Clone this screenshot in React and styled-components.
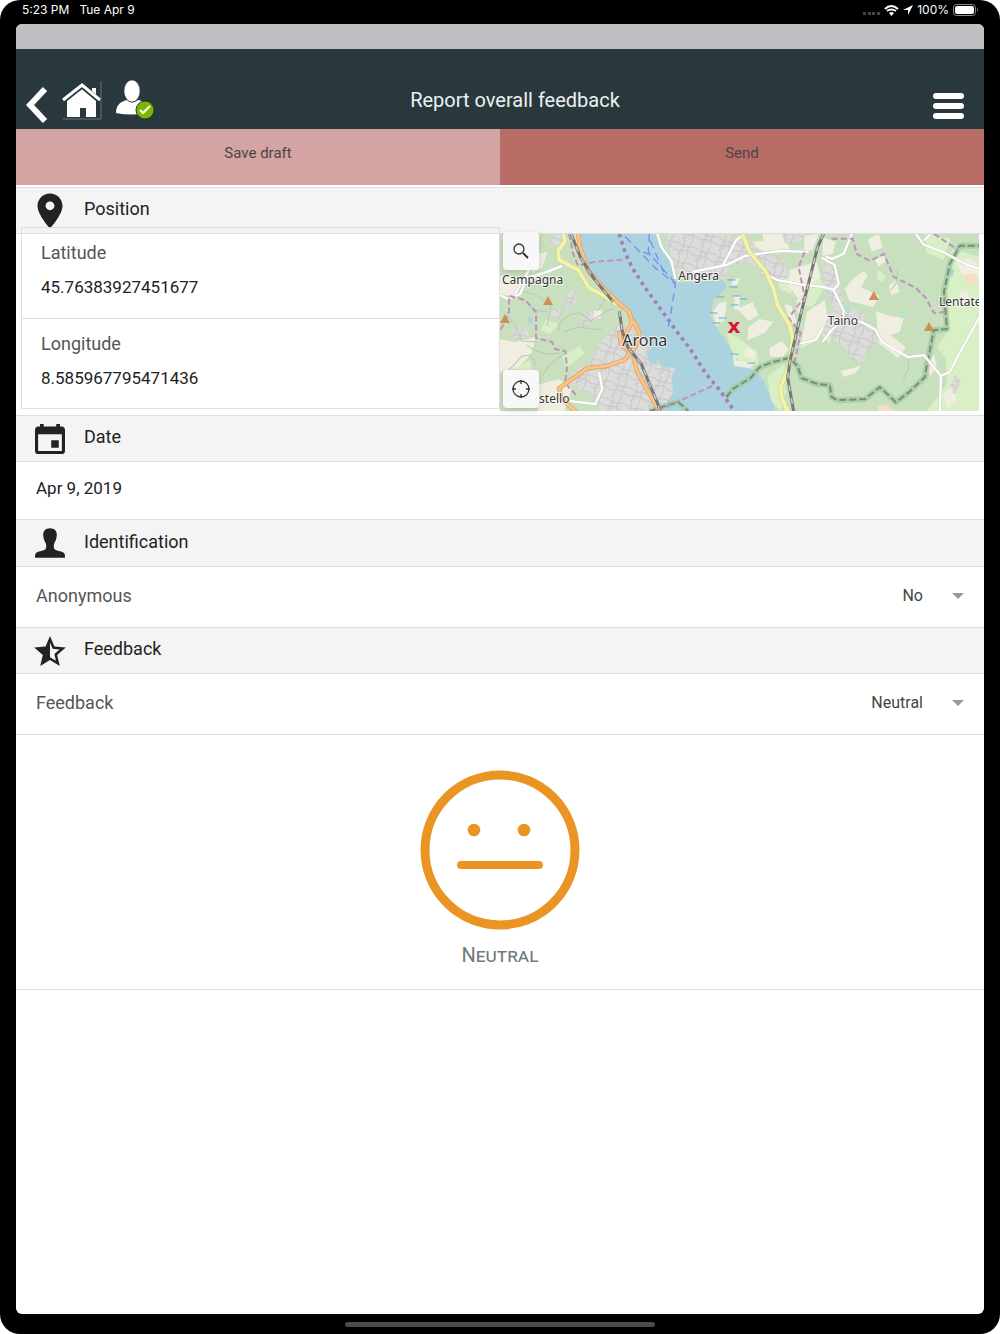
import React, { useState } from 'react';
import styled, { createGlobalStyle } from 'styled-components';
import { IoMdPin, IoMdCalendar, IoMdStarHalf } from 'react-icons/io';

const GlobalStyle = createGlobalStyle`
    * {
        box-sizing: border-box;
    }
    body {
        margin: 0;
        background: #fff;
        color: #222;
        font-family: Roboto, "Liberation Sans", sans-serif;
    }
    button, input, select {
        margin: 0;
        padding: 0;
        border: 0;
        background: transparent;
        color: inherit;
        font: inherit;
    }
`

const Device = styled.div`
    display: flex;
    flex-direction: column;
    min-height: 100vh;
    padding: 0 16px;
    background: #000;
    border-radius: 20px;
`

const StatusBar = styled.div`
    display: flex;
    align-items: center;
    gap: 10px;
    height: 24px;
    padding: 0 6px 4px;
    color: #fff;
    font: 12px/20px Inter, sans-serif;
`

const StatusRight = styled.div`
    display: flex;
    align-items: center;
    gap: 4px;
    margin-left: auto;
`

const Screen = styled.main`
    flex: 1;
    background: #fff;
    border-radius: 6px;
    overflow: hidden;
`

const TopStrip = styled.div`
    height: 25px;
    background: #bfbec3;
`

const Header = styled.header`
    display: grid;
    grid-template-columns: 1fr auto 1fr;
    align-items: center;
    height: 80px;
    padding: 22px 20px 0 10px;
    background: #28383d;
    color: #fff;
`

const HeaderIcons = styled.div`
    display: flex;
    align-items: center;
    gap: 14px;
`

const IconButton = styled.button`
    display: flex;
    cursor: pointer;
`

const Title = styled.h1`
    margin: 0;
    padding-left: 40px;
    color: #eef0f0;
    font-size: 20px;
    line-height: 24px;
    font-weight: 400;
`

const MenuButton = styled(IconButton)`
    justify-self: end;
    padding-top: 12px;
`

const Actions = styled.div`
    display: grid;
    grid-template-columns: 1fr 1fr;
    padding-bottom: 2px;
`

const ActionButton = styled.button`
    height: 56px;
    padding-bottom: 8px;
    background: ${props => props.$main ? "#b86c66" : "#d4a4a2"};
    color: #4d4444;
    font-size: 15px;
    cursor: pointer;
`

const SectionTitle = styled.h2`
    display: flex;
    align-items: center;
    gap: 14px;
    height: ${props => props.$tall ? "48px" : "47px"};
    margin: 0;
    padding: 0 14px;
    background: #f4f4f4;
    border: solid #dedede;
    border-width: 1px 0;
    font-size: 18px;
    font-weight: 400;
    svg {
        width: 40px;
        height: 40px;
    }
    span {
        padding-bottom: 4px;
    }
`

const PositionRow = styled.div`
    display: grid;
    grid-template-columns: 1fr 1fr;
    align-items: start;
    padding: 0 5px 4px;
`

const Coordinates = styled.div`
    position: relative;
    margin-top: -7px;
    border: 1px solid #dedede;
`

const Coordinate = styled.div`
    display: flex;
    flex-direction: column;
    gap: 10px;
    height: 90px;
    padding: 13px 19px 0;
    & + & {
        border-top: 1px solid #dedede;
    }
    label {
        color: #555;
        font-size: 18px;
        line-height: 24px;
    }
    input {
        width: 100%;
        font-size: 17px;
        line-height: 24px;
    }
`

const MapBox = styled.div`
    position: relative;
    height: 177px;
    > svg {
        display: block;
        width: 100%;
        height: 100%;
    }
`

const MapTools = styled.div`
    position: absolute;
    top: -2px;
    bottom: 3px;
    left: 3px;
    display: flex;
    flex-direction: column;
    justify-content: space-between;
`

const MapTool = styled.button`
    display: flex;
    align-items: center;
    justify-content: center;
    width: 36px;
    height: 38px;
    border-radius: 4px;
    background: #f8f8f8;
    box-shadow: 0 2px 6px rgba(0, 0, 0, 0.15);
    cursor: pointer;
`

const DateField = styled.input`
    display: block;
    width: 100%;
    height: 57px;
    padding: 0 20px 5px;
    font-size: 17px;
`

const SelectRow = styled.div`
    display: flex;
    align-items: center;
    justify-content: space-between;
    height: 60px;
    padding: 0 20px 3px;
    label {
        color: #555;
        font-size: 18px;
    }
`

const SelectBox = styled.div`
    display: flex;
    align-items: center;
    color: #444;
    select {
        appearance: none;
        width: 200px;
        height: 40px;
        padding-right: 41px;
        font-size: 16px;
        text-align-last: right;
    }
    svg {
        margin-left: -12px;
        pointer-events: none;
    }
`

const Result = styled.figure`
    display: flex;
    flex-direction: column;
    align-items: center;
    gap: 11px;
    margin: 0;
    padding: 35px 0 20px;
    border: solid #dedede;
    border-width: 1px 0;
    figcaption {
        color: #6f7b7e;
        font-size: 20px;
        line-height: 28px;
        font-variant: small-caps;
    }
`

const HomeBar = styled.div`
    display: flex;
    align-items: center;
    justify-content: center;
    height: 20px;
    &::after {
        content: "";
        width: 32%;
        height: 5px;
        border-radius: 3px;
        background: #4b4b4b;
    }
`

const LAKE = "M79 0 81 11 89 34 104 54 114 66 131 78 134 88 142 101 152 114 147 118 149 128 157 131 156 124 162 133 175 134 171 144 173 158 166 169 161 177H275L264 148 257 138 246 134 232 131V118L224 104 214 91 210 81 213 66 227 53 222 46 192 48 177 49 174 41 169 28 161 13 157 0Z"

const TOWNS = [
    "M119 91 134 88 142 101 152 114 147 118 149 128 157 131 163 134 175 134 171 144 173 158 166 169 161 177H101L92 160 70 150 74 137 88 130 95 114 104 103Z",
    "M163 0 213 0 240 3 262 17 280 25 288 38 284 50 262 38 247 28 229 32 224 45 203 43 190 48 179 44 171 24Z",
    "M321 28 335 34 338 52 343 70 363 81 374 94 376 108 366 120 362 130 351 126 340 110 322 99 325 88 333 74 324 53Z",
    "M281 0 303 0 300 8 285 10Z", "M69 57 77 58 74 71 67 77 64 70Z", "M80 84 93 75 94 85 83 94Z",
    "M49 77 59 75 64 82 54 86Z", "M10 100 25 93 30 101 19 106Z", "M454 140 460 148 453 160 449 151Z",
    "M49 3 62 0 60 10 51 14Z",
]

const FIELDS = [
    "M0 105 15 108 36 103 31 120 18 134 0 138Z", "M14 0 30 0 25 15 16 12Z", "M35 21 47 18 42 34 31 39Z",
    "M0 42 22 46 15 63 0 60Z", "M36 151 58 145 72 153 64 177H38Z", "M107 152 126 149 139 157 136 174 119 177 101 166Z",
    "M262 0 283 0 290 16 276 20 264 14Z", "M289 36 316 28 320 43 309 52 298 65 288 52Z", "M237 75 252 68 258 81 248 87Z",
    "M248 93 259 85 273 88 264 99 247 106Z", "M269 114 281 107 288 115 282 124 269 122Z",
    "M306 78 324 66 328 88 317 106 300 114Z", "M252 8 270 7 268 18 258 17Z", "M375 77 389 82 403 84 399 98 389 101 405 113 397 124 378 109Z",
    "M344 55 354 43 363 37 367 42 360 53 379 62 372 73 349 67Z", "M367 6 378 0 382 14 371 18Z", "M388 52 395 46 399 58 390 61Z",
    "M340 137 360 132 355 139 343 143Z", "M374 26 383 22 385 27 378 33Z", "M454 26 468 25 478 32V46L461 40Z",
    "M304 2 318 0 312 16 303 20Z", "M322 4 335 8 332 20 322 22Z", "M246 113 256 117 254 125 244 122Z",
    "M284 70 291 72 296 88 290 90Z", "M296 66 306 60 302 78 297 80Z", "M93 77 102 76 100 84 94 86Z",
    "M450 152 456 166 446 174 442 160Z", "M458 60 466 56 468 66 460 70Z", "M425 134 433 120 436 132 430 142Z",
]

const MEADOWS = [
    "M226 98 238 104 256 118 258 130 246 134 232 120Z", "M302 51 315 33 324 53 312 73 296 70Z",
    "M451 15 478 23V177H426L446 150 445 125 436 113 448 96 446 52Z", "M425 0 449 5 443 26 425 19Z",
    "M267 142 284 130 285 157 281 177 270 166Z", "M325 82 338 79 329 110 321 100Z", "M376 35 385 42 382 48 377 45Z",
    "M92 29 84 24 80 0 75 0 77 22Z", "M280 40 296 48 290 60 278 54Z", "M46 86 58 90 50 100 40 96Z",
    "M62 122 80 112 84 120 66 134Z", "M14 134 30 126 34 146 20 150Z",
]

const ROADS = [
    "M0 61 8 65 20 60 27 44 47 38 62 32", "M15 60 32 31", "M157 0 161 13 171 27 175 45",
    "M192 38 226 31 245 22 280 17 308 18", "M222 32 236 6 244 0", "M262 38 276 46 303 51 322 53 333 56",
    "M298 110 315 106 322 94", "M325 23 332 25 343 20 351 0", "M321 24 334 31 338 50 333 56 343 77 342 85 361 88 375 96 381 108 407 123 423 121 440 142 449 138 457 122 478 84",
    "M440 142 439 177", "M322 108 331 96 343 86", "M415 0 423 11 442 18 464 30 478 35", "M423 7 430 0",
    "M70 167 95 170 102 155 99 138",
]

const LANES = [
    "M8 82 15 91 22 107 38 108", "M22 57 36 61 51 72 47 92", "M58 98 60 88 71 80 80 79 91 87 107 77 115 74",
    "M63 98 78 93 102 96", "M27 111 34 116 47 120 61 119", "M8 137 22 122 31 121 36 132", "M43 140 50 130 64 120",
    "M106 65 97 77", "M34 76 47 78", "M390 56 395 50 397 36", "M407 125 408 134 402 146",
]

const BOUNDARIES = [
    "M-3 104 9 78 9 62 25 66 36 78 36 104 52 108 55 115 65 117 67 133 65 149 76 161",
    "M69 0 73 20 78 32 94 28 121 26 127 24", "M331 5 352 5 356 20 369 27 383 20 393 43 415 54 425 64 433 79 444 78", "M433 0 457 16",
    "M304 18 298 33 304 63 288 84 300 99 294 128", "M149 180 214 151",
]

const GREEN_BORDERS = [
    "M226 163 232 155 250 144 259 133 272 128 288 124 297 132 301 144 317 150 329 151 331 163 337 166 364 165 379 153 395 168 407 159 424 143 426 131 433 96 446 95 443 58 449 30 459 12 478 12",
    "M149 177 164 172 178 168 188 177",
]

const LOCAL_ROAD = "M63 0 65 7 58 17 59 26 70 32 78 36 89 54 104 62 116 70M242 0 249 18 257 28 265 37 273 55 277 71 289 91 292 104 289 131 280 153 281 163 288 180"
const MAIN_ROAD = "M78 0 80 14 88 37 104 55 117 68 129 78 132 88 127 97 119 99 121 110 133 121 137 138 159 177M134 88 139 99 136 111 124 126 106 132 87 134 72 145 59 154 61 164 75 177"
const RAILWAY = "M71 0 80 23 94 45 113 68M119 77 122 97 128 114 141 130 158 171 159 177M323 0 317 13 301 77 290 124 287 143 293 177"

const PEAKS = [[48, 67], [5, 85], [373, 62], [428, 93]]
const MARSH = [[231, 46], [233, 53], [220, 63], [236, 62], [234, 71], [213, 79], [222, 84], [216, 89], [243, 65], [234, 120], [251, 129]]

const MapDrawing = () => (
    <svg viewBox="0 0 478 177" preserveAspectRatio="xMidYMid slice" fill="none" role="img" aria-label="Map">
        <defs>
            <clipPath id="towns">
                <path d={TOWNS.join(" ")} />
            </clipPath>
            <pattern id="streets" width="19" height="17" patternUnits="userSpaceOnUse" patternTransform="rotate(18)">
                <path d="M0 4 7 6 19 4M6 0 7 6 4 17M13 0 12 9 14 17M0 12 12 9 19 12M4 17 10 10" stroke="#c0c0c0" strokeWidth=".8" />
            </pattern>
        </defs>
        <rect width="478" height="177" fill="#c8e0be" />
        <path d={MEADOWS.join(" ")} fill="#d9efc6" />
        <path d={FIELDS.join(" ")} fill="#efeee0" />
        <path d={TOWNS.join(" ")} fill="#dcdcda" />
        <rect width="478" height="177" fill="url(#streets)" clipPath="url(#towns)" />
        <path d={LAKE} fill="#abd3df" />
        <path d="M28 83 33 84 32 90 28 88ZM449 34 454 36 451 43 447 41Z" fill="#abd7df" />
        <path d="M28 73 33 70 34 78 29 76ZM398 78 406 78 405 84 399 84ZM344 72 350 71 348 78 343 79Z" fill="#b5e3cf" />
        <path d="M462 41 474 39 478 46 469 52ZM377 172 387 170 392 177H378Z" fill="#f4dfc5" />
        <path d="M212 78 219 69 226 68 224 86 216 92ZM234 62 240 61 239 75 234 76ZM232 45 239 44 237 51 231 52ZM233 118 236 127 254 128 250 134 234 132Z" fill="#efeee6" />
        <path d={LANES.join(" ")} stroke="#bdc5b8" />
        {GREEN_BORDERS.map(d => (
            <g key={d} strokeLinejoin="round">
                <path d={d} stroke="#9fcb9d" strokeWidth="6" opacity=".75" />
                <path d={d} stroke="#7b8b7b" strokeWidth="2" strokeDasharray="7 3" />
            </g>
        ))}
        <path d={ROADS.join(" ")} stroke="#cbcbc8" strokeWidth="3" strokeLinejoin="round" />
        <path d={ROADS.join(" ")} stroke="#fff" strokeWidth="2.2" strokeLinejoin="round" />
        <path d={BOUNDARIES.join(" ")} stroke="#bf93be" strokeWidth="2" strokeDasharray="6 3" />
        <g strokeLinejoin="round" strokeLinecap="round">
            <path d={LOCAL_ROAD} stroke="#cfd39a" strokeWidth="5" />
            <path d={LOCAL_ROAD} stroke="#f3f4a9" strokeWidth="3.6" />
            <path d={MAIN_ROAD} stroke="#dfa468" strokeWidth="4.6" />
            <path d={MAIN_ROAD} stroke="#f8c488" strokeWidth="3" />
        </g>
        <path d={RAILWAY} stroke="#777" strokeWidth="3" />
        <path d={RAILWAY} stroke="#ccc" strokeWidth="1.4" strokeDasharray="6 7" />
        <path d="M119 0 125 19 132 34 145 54 161 76 176 97 190 115 205 139 220 157 236 180" stroke="#a07fbb" strokeWidth="3.6" strokeDasharray="3.6 4" />
        <path d="M125 3 155 34 175 50 172 70 168 93M149 0 148 18 158 30 175 49M143 18 152 22M150 7 164 40" stroke="#7a8ff0" strokeWidth="1.4" strokeDasharray="8 5" />
        {MARSH.map(([x, y]) => <path key={`${x}-${y}`} d={`M${x - 4} ${y}h8`} stroke="#5ba9dc" />)}
        {PEAKS.map(([x, y]) => <path key={x} d={`M${x} ${y - 5}l5 9h-10z`} fill="#d08f55" />)}
        <g fill="#333" stroke="#fff" strokeWidth="2" strokeOpacity=".7" paintOrder="stroke" fontFamily="'Noto Sans', sans-serif" fontSize="12">
            <text x="2" y="50">Campagna</text>
            <text x="178" y="46">Angera</text>
            <text x="327" y="91">Taino</text>
            <text x="438" y="72">Lentate</text>
            <text x="39" y="169">stello</text>
            <text x="122" y="112" fontSize="16">Arona</text>
        </g>
        <text x="227" y="99" fill="#dc1438" fontFamily="'DejaVu Sans', sans-serif" fontWeight="700" fontSize="20">x</text>
    </svg>
)

const PersonIcon = () => (
    <svg viewBox="0 0 512 512" fill="currentColor" aria-hidden="true">
        <path d="M256 67C198 67 167 104 169 155C171 205 188 238 203 262C210 290 208 312 202 330C188 354 104 362 78 384C66 394 64 414 64 444H448C448 414 446 394 434 384C408 362 324 354 310 330C304 312 302 290 309 262C324 238 341 205 343 155C345 104 314 67 256 67Z" />
    </svg>
)

const StatusIcons = () => (
    <StatusRight>
        <svg width="50" height="14" viewBox="0 0 50 14" fill="#fff" aria-hidden="true">
            <path d="M0 9h3v3H0zM5 9h3v3H5zM9 9h3v3H9zM14 9h3v3h-3z" fill="#444" />
            <path d="M22 6Q28 0 35 6M24 8Q28 5 33 8" fill="none" stroke="#fff" strokeWidth="2" />
            <path d="M26 10q2.500-2 5 0L28.500 13z" />
            <path d="M50 2 40 7h5v5z" />
        </svg>
        100%
        <svg width="25" height="12" viewBox="0 0 25 12" aria-hidden="true">
            <rect x=".5" y=".5" width="22" height="11" rx="3" fill="none" stroke="#888" />
            <rect x="2" y="2" width="19" height="8" rx="2" fill="#fff" />
            <path d="M24 4q2 2 0 4z" fill="#888" />
        </svg>
    </StatusRight>
)

const DropDown = ({ id, value, options, onChange }) => (
    <SelectBox>
        <select id={id} value={value} onChange={e => onChange(e.target.value)}>
            {options.map(option => <option key={option}>{option}</option>)}
        </select>
        <svg width="12" height="6" viewBox="0 0 12 6" aria-hidden="true"><path d="M0 0h12L6 6z" fill="#999" /></svg>
    </SelectBox>
)

const App = () => {
    const [anonymous, setAnonymous] = useState("No")
    const [feedback, setFeedback] = useState("Neutral")

    return (
        <>
            <GlobalStyle />
            <Device>
                <StatusBar>
                    <span>5:23 PM</span>
                    <span>Tue Apr 9</span>
                    <StatusIcons />
                </StatusBar>
                <Screen>
                    <TopStrip />
                    <Header>
                        <HeaderIcons>
                            <IconButton aria-label="Back">
                                <svg width="22" height="48" viewBox="0 0 22 48" fill="none" stroke="#fff" strokeWidth="6">
                                    <path d="M19 13 4 29 19 45" strokeLinejoin="miter" />
                                </svg>
                            </IconButton>
                            <IconButton aria-label="Home">
                                <svg width="40" height="40" viewBox="0 0 40 40" fill="#fff">
                                    <path d="M39 1v38H1" fill="none" stroke="#66747a" />
                                    <path d="M20 8 34 20V37H24V28H18V37H5V20z" />
                                    <path d="M30 8h4v10l-4-4z" />
                                    <path d="M1 21 20 6 38 21" fill="none" stroke="#28383d" strokeWidth="5" />
                                    <path d="M1 20 20 5 38 20" fill="none" stroke="#fff" strokeWidth="3" />
                                </svg>
                            </IconButton>
                            <IconButton aria-label="Account">
                                <svg width="40" height="40" viewBox="0 0 40 40" fill="#fff">
                                    <path d="M0 33C0 24 6 21 11 20Q16 25 22 20C28 21 32 24 32 33Q15 36 0 33z" />
                                    <ellipse cx="16" cy="11" rx="8" ry="11" stroke="#28383d" strokeWidth=".5" />
                                    <circle cx="29" cy="30" r="9" fill="#7ab800" stroke="#28383d" />
                                    <path d="M24 30 27 33 34 26" fill="none" stroke="#fff" strokeWidth="2" />
                                </svg>
                            </IconButton>
                        </HeaderIcons>
                        <Title>Report overall feedback</Title>
                        <MenuButton aria-label="Menu">
                            <svg width="31" height="27" viewBox="0 0 31 27" fill="#fff">
                                <rect width="31" height="6" rx="3" />
                                <rect y="10" width="31" height="6" rx="3" />
                                <rect y="20" width="31" height="6" rx="3" />
                            </svg>
                        </MenuButton>
                    </Header>
                    <Actions>
                        <ActionButton>Save draft</ActionButton>
                        <ActionButton $main>Send</ActionButton>
                    </Actions>

                    <SectionTitle><IoMdPin /><span>Position</span></SectionTitle>
                    <PositionRow>
                        <Coordinates>
                            <Coordinate>
                                <label htmlFor="latitude">Latitude</label>
                                <input id="latitude" defaultValue="45.76383927451677" />
                            </Coordinate>
                            <Coordinate>
                                <label htmlFor="longitude">Longitude</label>
                                <input id="longitude" defaultValue="8.585967795471436" />
                            </Coordinate>
                        </Coordinates>
                        <MapBox>
                            <MapDrawing />
                            <MapTools>
                                <MapTool aria-label="Search">
                                    <svg width="18" height="18" viewBox="0 0 18 18" fill="none" stroke="#333" strokeWidth="1.300">
                                        <circle cx="7" cy="7" r="5" />
                                        <path d="M11 11 16 16" strokeWidth="2" />
                                    </svg>
                                </MapTool>
                                <MapTool aria-label="Locate">
                                    <svg width="20" height="20" viewBox="0 0 20 20" fill="none" stroke="#333" strokeWidth="1.300">
                                        <circle cx="10" cy="10" r="8" />
                                        <path d="M10 1v4M10 15v4M1 10h4M15 10h4" />
                                    </svg>
                                </MapTool>
                            </MapTools>
                        </MapBox>
                    </PositionRow>

                    <SectionTitle><IoMdCalendar /><span>Date</span></SectionTitle>
                    <DateField aria-label="Date" defaultValue="Apr 9, 2019" />

                    <SectionTitle $tall><PersonIcon /><span>Identification</span></SectionTitle>
                    <SelectRow>
                        <label htmlFor="anonymous">Anonymous</label>
                        <DropDown id="anonymous" value={anonymous} options={["No", "Yes"]} onChange={setAnonymous} />
                    </SelectRow>

                    <SectionTitle><IoMdStarHalf /><span>Feedback</span></SectionTitle>
                    <SelectRow>
                        <label htmlFor="feedback">Feedback</label>
                        <DropDown id="feedback" value={feedback} options={["Positive", "Neutral", "Negative"]} onChange={setFeedback} />
                    </SelectRow>
                    <Result>
                        <svg width="160" height="160" viewBox="0 0 160 160" fill="none" stroke="#e99423" aria-hidden="true">
                            <circle cx="80" cy="80" r="75" strokeWidth="9" />
                            <path d="M41 95h78" strokeWidth="8" strokeLinecap="round" />
                            <circle cx="54" cy="60" r="6.300" fill="#e99423" stroke="none" />
                            <circle cx="104" cy="60" r="6.300" fill="#e99423" stroke="none" />
                        </svg>
                        <figcaption>{feedback}</figcaption>
                    </Result>
                </Screen>
                <HomeBar />
            </Device>
        </>
    );
}

export default App;
